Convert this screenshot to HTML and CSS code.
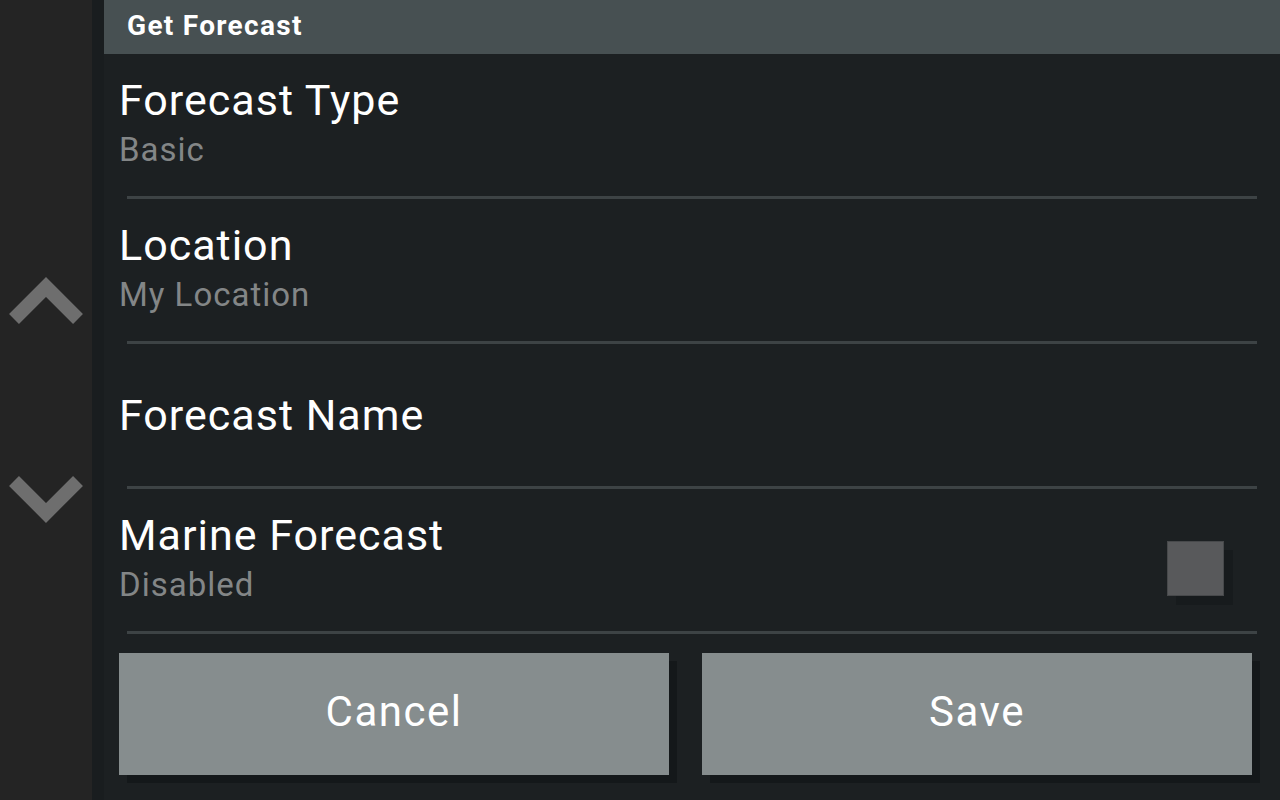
FILE: index.html
```html
<!DOCTYPE html>
<html lang="en">
<head>
    <meta charset="UTF-8">
    <meta name="viewport" content="width=device-width, initial-scale=1.0">
    <title>Get Forecast</title>
    <link rel="stylesheet" href="styles.css">
</head>
<body>
    <!-- Scroll arrows -->
    <aside class="sidebar">
        <svg class="arrow arrow-up" width="92" height="60" viewBox="0 0 92 60">
            <polyline points="14,49 46,17 78,49" fill="none" stroke="#6e6e6e" stroke-width="14"/>
        </svg>
        <svg class="arrow arrow-down" width="92" height="60" viewBox="0 0 92 60">
            <polyline points="14,11 46,43 78,11" fill="none" stroke="#6e6e6e" stroke-width="14"/>
        </svg>
    </aside>
    <div class="strip"></div>

    <main class="panel">
        <header class="panel-header">Get Forecast</header>

        <div class="setting">
            <div class="setting-text">
                <div class="setting-title">Forecast Type</div>
                <div class="setting-value">Basic</div>
            </div>
        </div>
        <div class="divider"></div>

        <div class="setting">
            <div class="setting-text">
                <div class="setting-title">Location</div>
                <div class="setting-value">My Location</div>
            </div>
        </div>
        <div class="divider"></div>

        <div class="setting">
            <div class="setting-text">
                <div class="setting-title">Forecast Name</div>
            </div>
        </div>
        <div class="divider"></div>

        <div class="setting">
            <div class="setting-text">
                <div class="setting-title">Marine Forecast</div>
                <div class="setting-value">Disabled</div>
            </div>
            <div class="checkbox"></div>
        </div>
        <div class="divider"></div>

        <div class="actions">
            <button type="button" class="action">Cancel</button>
            <button type="button" class="action">Save</button>
        </div>
    </main>
</body>
</html>
```

FILE: styles.css
```css
html, body {
    height: 100%;
}
body {
    margin: 0;
    display: flex;
    background-color: #1c2022;
    font-family: Roboto, "Liberation Sans", Arial, sans-serif;
    color: #ffffff;
    overflow: hidden;
}

/* Left column with the scroll arrows */
.sidebar {
    width: 92px;
    flex-shrink: 0;
    background-color: #242424;
    display: flex;
    flex-direction: column;
    padding-top: 270px;
}
.arrow {
    display: block;
}
.arrow-down {
    margin-top: 140px;
}
.strip {
    width: 12px;
    flex-shrink: 0;
    background-color: #191d1f;
}

/* Main panel */
.panel {
    flex: 1;
    display: flex;
    flex-direction: column;
}
.panel-header {
    height: 54px;
    background-color: #475052;
    padding-left: 23px;
    font-size: 28px;
    font-weight: bold;
    letter-spacing: 1.3px;
    line-height: 52px;
}

.setting {
    height: 142px;
    display: flex;
    align-items: center;
    padding: 0 56px 0 15px;
}
.setting-text {
    flex: 1;
}
.setting-title {
    font-size: 43px;
    letter-spacing: 1px;
    line-height: 50px;
}
.setting-value {
    font-size: 33px;
    letter-spacing: 1px;
    line-height: 50px;
    color: #838687;
}
.divider {
    height: 3px;
    background-color: #3d4345;
    margin: 0 23px;
}

.checkbox {
    width: 55px;
    height: 53px;
    margin-top: 17px;
    background-color: #58595b;
    border: 1px solid #47494b;
    box-shadow: 9px 9px 0 #171b1d;
}

/* Cancel / Save */
.actions {
    display: flex;
    gap: 33px;
    padding: 19px 28px 0 15px;
}
.action {
    flex: 1;
    height: 122px;
    padding-bottom: 6px;
    border: none;
    background-color: #868d8e;
    color: #ffffff;
    font-family: Roboto, "Liberation Sans", Arial, sans-serif;
    font-size: 42px;
    letter-spacing: 1.5px;
    box-shadow: 8px 8px 0 #14181a;
}
```
